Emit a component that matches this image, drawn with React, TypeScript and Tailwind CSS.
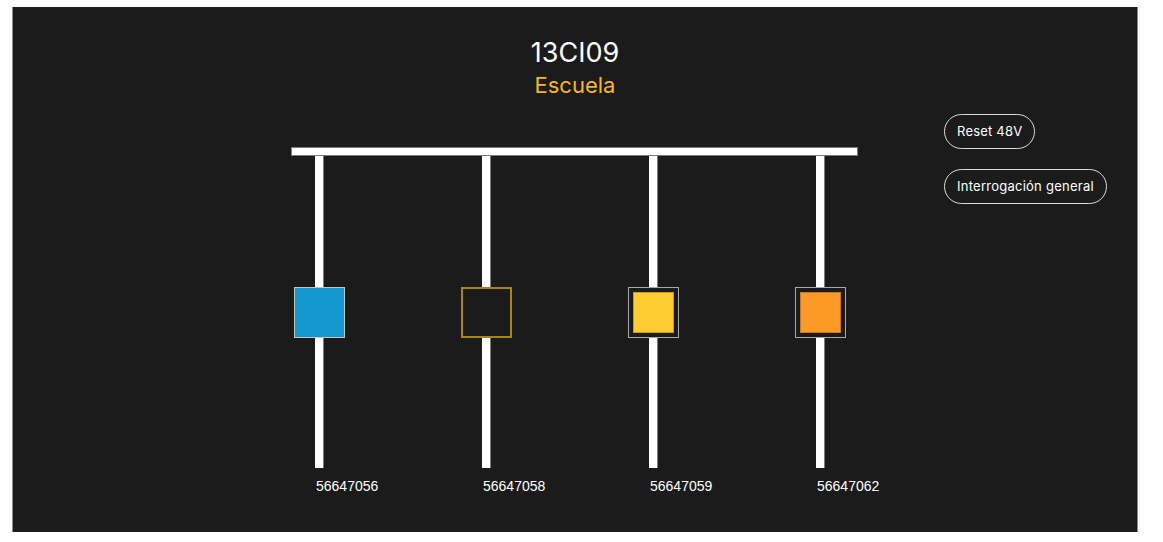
import React from "react";

type Cell = {
  id: string;
  kind: "blue" | "empty" | "yellow" | "orange";
};

const cells: Cell[] = [
  { id: "56647056", kind: "blue" },
  { id: "56647058", kind: "empty" },
  { id: "56647059", kind: "yellow" },
  { id: "56647062", kind: "orange" },
];

function Indicator({ kind }: { kind: Cell["kind"] }) {
  if (kind === "blue") {
    return (
      <div className="w-[51px] h-[51px] bg-[#1597cf] border border-[#c4c4c4]" />
    );
  }
  if (kind === "empty") {
    return (
      <div className="w-[51px] h-[51px] bg-[#1b1b1b] border-2 border-[#a8841f]" />
    );
  }
  const inner =
    kind === "yellow"
      ? "bg-[#fecb30] border-[#c59b22]"
      : "bg-[#fd9a27] border-[#c47a22]";
  return (
    <div className="w-[51px] h-[51px] bg-[#1b1b1b] border border-[#a9a9a9] p-[4px]">
      <div className={`w-full h-full border ${inner}`} />
    </div>
  );
}

export default function App() {
  return (
    <div className="w-full min-h-[542px] bg-white pl-[12px] pt-[7px]">
      <div
        className="w-[1126px] h-[525px] bg-[#1b1b1b] border-x border-[#8a8a8a] flex flex-col"
        style={{ fontFamily: "Inter, 'Noto Sans', sans-serif" }}
      >
        {/* titulo */}
        <div className="flex flex-col items-center pt-[28px]">
          <h1 className="text-[27px] leading-[36px] text-white">13CI09</h1>
          <h2 className="text-[22px] leading-[28px] text-[#f9b623]">Escuela</h2>
        </div>

        <div className="flex mt-[15px]">
          {/* diagrama */}
          <div className="ml-[278px] pt-[33px]">
            <div className="w-[567px] h-[9px] bg-white border border-[#7a7a7a]" />
            <div className="flex gap-[116px] pl-[3px]">
              {cells.map((c) => (
                <div key={c.id} className="w-[51px] flex flex-col items-center">
                  <div className="w-[9px] h-[131px] bg-white border-r border-[#7a7a7a]" />
                  <Indicator kind={c.kind} />
                  <div className="w-[9px] h-[130px] bg-white border-r border-[#7a7a7a]" />
                  <span
                    className="self-start ml-[22px] mt-[10px] text-[14px] leading-[16px] text-white whitespace-nowrap"
                    style={{ fontFamily: "'Liberation Sans', Arial, sans-serif" }}
                  >
                    {c.id}
                  </span>
                </div>
              ))}
            </div>
          </div>

          {/* botones */}
          <div className="ml-[86px] flex flex-col items-start gap-[20px]">
            <button className="h-[35px] px-[12px] rounded-full border border-[#d9d9d9] text-white text-[13px] tracking-[0.2px]">
              Reset 48V
            </button>
            <button className="h-[35px] px-[12px] rounded-full border border-[#d9d9d9] text-white text-[13px] tracking-[0.25px]">
              Interrogación general
            </button>
          </div>
        </div>
      </div>
    </div>
  );
}
